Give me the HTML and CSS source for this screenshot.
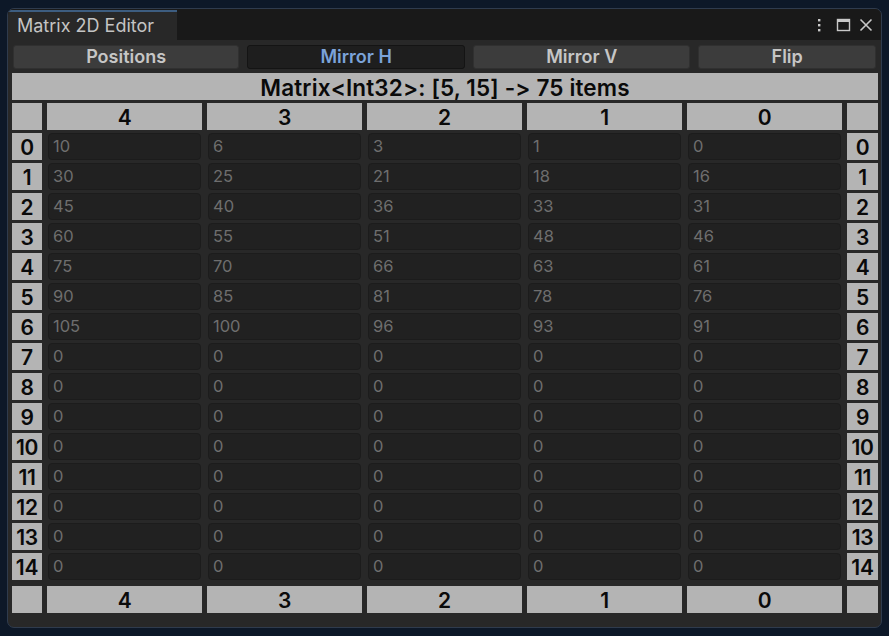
FILE: index.html
```html
<!DOCTYPE html>
<html>
<head>
<meta charset="utf-8">
<link rel="stylesheet" href="styles.css">
</head>
<body>
<div class="window">
  <div class="tabbar">
    <div class="tab">Matrix 2D Editor</div>
    <div class="tab-icons">
      <svg class="ico kebab" width="10" height="14" viewBox="0 0 10 14"><rect x="4" y="1" width="2.4" height="2.4" fill="#c8c8c8"/><rect x="4" y="6" width="2.4" height="2.4" fill="#c8c8c8"/><rect x="4" y="11" width="2.4" height="2.4" fill="#c8c8c8"/></svg>
      <svg class="ico" width="15" height="14" viewBox="0 0 15 14"><rect x="1.5" y="1.5" width="12" height="11" fill="none" stroke="#c8c8c8" stroke-width="1.4"/><rect x="1" y="1" width="13" height="3" fill="#c8c8c8"/></svg>
      <svg class="ico" width="14" height="14" viewBox="0 0 14 14"><path d="M1.5 1.5 L12.5 12.5 M12.5 1.5 L1.5 12.5" stroke="#c8c8c8" stroke-width="1.6"/></svg>
    </div>
  </div>
  <div class="toolbar">
    <div class="btn">Positions</div>
    <div class="btn active">Mirror H</div>
    <div class="btn">Mirror V</div>
    <div class="btn">Flip</div>
  </div>
  <div class="content">
    <div class="titlebar">Matrix&lt;Int32&gt;: [5, 15] -&gt; 75 items</div>
    <div class="grid" id="grid"></div>
  </div>
</div>
<script>
(function(){
  var g = document.getElementById('grid');
  var data = [
    [10,6,3,1,0],[30,25,21,18,16],[45,40,36,33,31],[60,55,51,48,46],
    [75,70,66,63,61],[90,85,81,78,76],[105,100,96,93,91]
  ];
  var cols = [4,3,2,1,0];
  function add(cls, txt){ var d=document.createElement('div'); d.className=cls; d.textContent=txt; g.appendChild(d); }
  add('hd corner','');
  cols.forEach(function(c){ add('hd col', c); });
  add('hd corner','');
  for (var r=0;r<15;r++){
    add('hd lbl', r);
    for (var c=0;c<5;c++){
      var v = r<7 ? data[r][c] : 0;
      add('cell', v);
    }
    add('hd lbl', r);
  }
  add('hd corner foot','');
  cols.forEach(function(c){ add('hd col foot', c); });
  add('hd corner foot','');
})();
</script>
</body>
</html>
```
FILE: styles.css
```css
* { box-sizing: border-box; }
html, body { margin: 0; padding: 0; }
body {
  background: #0d1828;
  width: 889px;
  height: 636px;
  overflow: hidden;
  font-family: Inter, "Noto Sans", sans-serif;
  font-variant-ligatures: none;
  font-feature-settings: "calt" 0, "liga" 0;
}
.window {
  margin: 8px 0 0 7px;
  width: 875px;
  height: 620px;
  border: 1px solid #2f3b4d;
  border-radius: 7px;
  background: #282828;
  overflow: hidden;
}
.tabbar {
  height: 31px;
  background: #191919;
  display: flex;
  align-items: flex-end;
  justify-content: space-between;
}
.tab {
  width: 169px;
  height: 30px;
  background: #282828;
  border-top: 2px solid #3d5d80;
  color: #c4c4c4;
  font-size: 18px;
  padding-left: 9px;
  line-height: 27px;
}
.tab-icons {
  display: flex;
  align-items: center;
  gap: 8px;
  height: 31px;
  padding-right: 8px;
  padding-top: 1px;
}
.tab-icons .ico { display: block; }
.tab-icons .kebab { margin-right: 4px; }
.toolbar {
  display: flex;
  gap: 8px;
  padding: 5px 5px 0 5px;
}
.btn {
  flex: 1 1 auto;
  height: 24px;
  background: #3c3c3c;
  border: 1px solid #303030;
  border-radius: 3px;
  color: #c6c6c6;
  font-weight: 600;
  font-size: 18px;
  text-align: center;
  line-height: 22px;
}
.btn.active {
  background: #1e1e1e;
  border-color: #141414;
  color: #7ba3d9;
}
.content {
  padding: 4px 3px 0 4px;
}
.titlebar {
  height: 27px;
  background: #b4b4b4;
  color: #0a0a0a;
  font-weight: 600;
  font-size: 22.5px;
  letter-spacing: 0.15px;
  text-align: center;
  line-height: 29px;
}
.grid {
  margin-top: 3px;
  display: grid;
  grid-template-columns: 30px repeat(5, 1fr) 31px;
  grid-template-rows: repeat(16, 27px) 30px;
  column-gap: 5px;
  row-gap: 3px;
}
.hd {
  background: #b4b4b4;
  color: #0a0a0a;
  font-weight: 600;
  font-size: 21px;
  text-align: center;
  line-height: 30px;
  white-space: nowrap;
  overflow: hidden;
  letter-spacing: -0.3px;
}
.hd.col { line-height: 29px; }
.hd.foot { align-self: end; height: 27px; }
.cell {
  background: #212121;
  border: 1px solid #1c1c1c;
  border-radius: 4px;
  color: #6e6e6e;
  font-size: 16.5px;
  line-height: 25px;
  padding-left: 4px;
  margin: 0 1px;
}
```
